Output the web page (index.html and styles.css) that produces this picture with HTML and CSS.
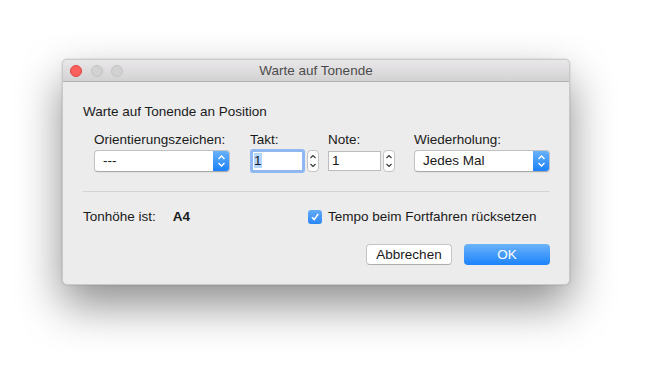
FILE: index.html
```html
<!DOCTYPE html>
<html lang="de">
<head>
    <meta charset="UTF-8">
    <title>Warte auf Tonende</title>
    <link rel="stylesheet" href="styles.css">
</head>
<body>
    <div class="window">
        <div class="titlebar">
            <div class="lights">
                <span class="light light-close"></span>
                <span class="light"></span>
                <span class="light"></span>
            </div>
            <div class="title">Warte auf Tonende</div>
        </div>

        <div class="content">
            <div class="heading">Warte auf Tonende an Position</div>

            <div class="fields">
                <div class="field field-orient">
                    <label>Orientierungszeichen:</label>
                    <div class="popup">
                        <span class="popup-text">---</span>
                        <span class="popup-arrows">
                            <svg width="9" height="14" viewBox="0 0 9 14"><path d="M1.5 5 L4.5 2 L7.5 5 M1.5 9 L4.5 12 L7.5 9" fill="none" stroke="#fff" stroke-width="1.4"/></svg>
                        </span>
                    </div>
                </div>

                <div class="field field-takt">
                    <label>Takt:</label>
                    <div class="num">
                        <div class="textbox focused"><span class="sel">1</span></div>
                        <div class="stepper">
                            <svg width="8" height="18" viewBox="0 0 8 18"><path d="M1.5 6 L4 3.5 L6.5 6 M1.5 12 L4 14.5 L6.5 12" fill="none" stroke="#333" stroke-width="1.1"/></svg>
                        </div>
                    </div>
                </div>

                <div class="field field-note">
                    <label>Note:</label>
                    <div class="num">
                        <div class="textbox">1</div>
                        <div class="stepper">
                            <svg width="8" height="18" viewBox="0 0 8 18"><path d="M1.5 6 L4 3.5 L6.5 6 M1.5 12 L4 14.5 L6.5 12" fill="none" stroke="#333" stroke-width="1.1"/></svg>
                        </div>
                    </div>
                </div>

                <div class="field field-repeat">
                    <label>Wiederholung:</label>
                    <div class="popup">
                        <span class="popup-text">Jedes Mal</span>
                        <span class="popup-arrows">
                            <svg width="9" height="14" viewBox="0 0 9 14"><path d="M1.5 5 L4.5 2 L7.5 5 M1.5 9 L4.5 12 L7.5 9" fill="none" stroke="#fff" stroke-width="1.4"/></svg>
                        </span>
                    </div>
                </div>
            </div>

            <div class="separator"></div>

            <div class="info-row">
                <div class="pitch">
                    <span>Tonhöhe ist:</span>
                    <span class="pitch-value">A4</span>
                </div>
                <div class="check">
                    <span class="checkbox">
                        <svg width="10" height="10" viewBox="0 0 10 10"><path d="M2 5.2 L4.2 7.6 L8.2 2" fill="none" stroke="#fff" stroke-width="1.6"/></svg>
                    </span>
                    <span>Tempo beim Fortfahren rücksetzen</span>
                </div>
            </div>

            <div class="buttons">
                <button class="btn">Abbrechen</button>
                <button class="btn btn-default">OK</button>
            </div>
        </div>
    </div>
</body>
</html>
```

FILE: styles.css
```css
* { margin: 0; padding: 0; box-sizing: border-box; }
html, body { min-height: 100%; }
body {
    background: #fff;
    font-family: "Liberation Sans", Arial, sans-serif;
    font-size: 13.5px;
    color: #1a1a1a;
    padding: 59px 0 0 62px;
    min-height: 366px;
}
.window {
    width: 508px;
    height: 226px;
    background: #ececec;
    border-radius: 5px;
    border: 1px solid #c9c9c9;
    box-shadow: 0 20px 45px rgba(0, 0, 0, 0.45), 0 0 2px rgba(0, 0, 0, 0.2);
    overflow: hidden;
}
.titlebar {
    height: 22px;
    display: flex;
    align-items: center;
    background: linear-gradient(#e9e7e9, #d3d2d3);
    border-bottom: 1px solid #b3b3b3;
    position: relative;
}
.lights {
    display: flex;
    gap: 8.5px;
    padding-left: 7px;
}
.light {
    width: 12px;
    height: 12px;
    border-radius: 50%;
    background: #d3d2d3;
    border: 1px solid #c4c3c4;
}
.light-close {
    background: #fc605c;
    border-color: #e0443e;
}
.title {
    position: absolute;
    left: 0;
    right: 0;
    text-align: center;
    color: #4c4c4c;
    font-size: 13.5px;
}
.content {
    padding: 22px 19px 0 20px;
}
.heading {
    line-height: 16px;
}
.fields {
    display: flex;
    margin-top: 12px;
    padding-left: 11px;
}
.field label {
    display: block;
    line-height: 16px;
    margin-bottom: 2px;
}
.field-orient { width: 156px; }
.field-takt { width: 78px; }
.field-note { width: 86px; }
.popup {
    width: 136px;
    height: 22px;
    display: flex;
    background: #fff;
    border: 1px solid #c2c2c2;
    border-bottom-color: #aaa;
    border-radius: 4px;
    overflow: hidden;
    box-shadow: 0 1px 1px rgba(0, 0, 0, 0.05);
}
.popup-text {
    flex: 1;
    padding-left: 8px;
    line-height: 20px;
}
.popup-arrows {
    width: 16px;
    display: flex;
    align-items: center;
    justify-content: center;
    background: linear-gradient(#69b1fa, #1a82fb);
}
.num {
    display: flex;
    align-items: center;
    gap: 2px;
}
.textbox {
    width: 53px;
    height: 20px;
    background: #fff;
    border: 1px solid #bdbdbd;
    padding-left: 3px;
    line-height: 18px;
    margin: 1px 0;
}
.textbox.focused {
    width: 55px;
    height: 24px;
    margin: -1px 0;
    border: 3px solid #8fb7f2;
    border-radius: 3px;
    line-height: 18px;
    padding-left: 1px;
}
.sel { background: #b4d5fe; }
.stepper {
    width: 12px;
    height: 22px;
    background: #fff;
    border: 1px solid #c4c4c4;
    border-radius: 4px;
    display: flex;
    align-items: center;
    justify-content: center;
}
.separator {
    height: 1px;
    background: #d4d4d4;
    margin-top: 19px;
}
.info-row {
    display: flex;
    margin-top: 17px;
    line-height: 16px;
}
.pitch {
    width: 225px;
    display: flex;
    gap: 17px;
}
.pitch-value { font-weight: bold; }
.check {
    display: flex;
    align-items: center;
    gap: 6px;
}
.checkbox {
    width: 14px;
    height: 14px;
    border-radius: 3px;
    background: linear-gradient(#64acf9, #2a86f6);
    display: flex;
    align-items: center;
    justify-content: center;
}
.buttons {
    display: flex;
    justify-content: flex-end;
    gap: 12px;
    margin-top: 19px;
}
.btn {
    width: 86px;
    height: 21px;
    font-family: inherit;
    font-size: 13.5px;
    color: #1a1a1a;
    background: #fff;
    border: 1px solid #c5c5c5;
    border-bottom-color: #adadad;
    border-radius: 4px;
}
.btn-default {
    color: #fff;
    border: none;
    background: linear-gradient(#6cb3fa, #1c83fb);
}
```
